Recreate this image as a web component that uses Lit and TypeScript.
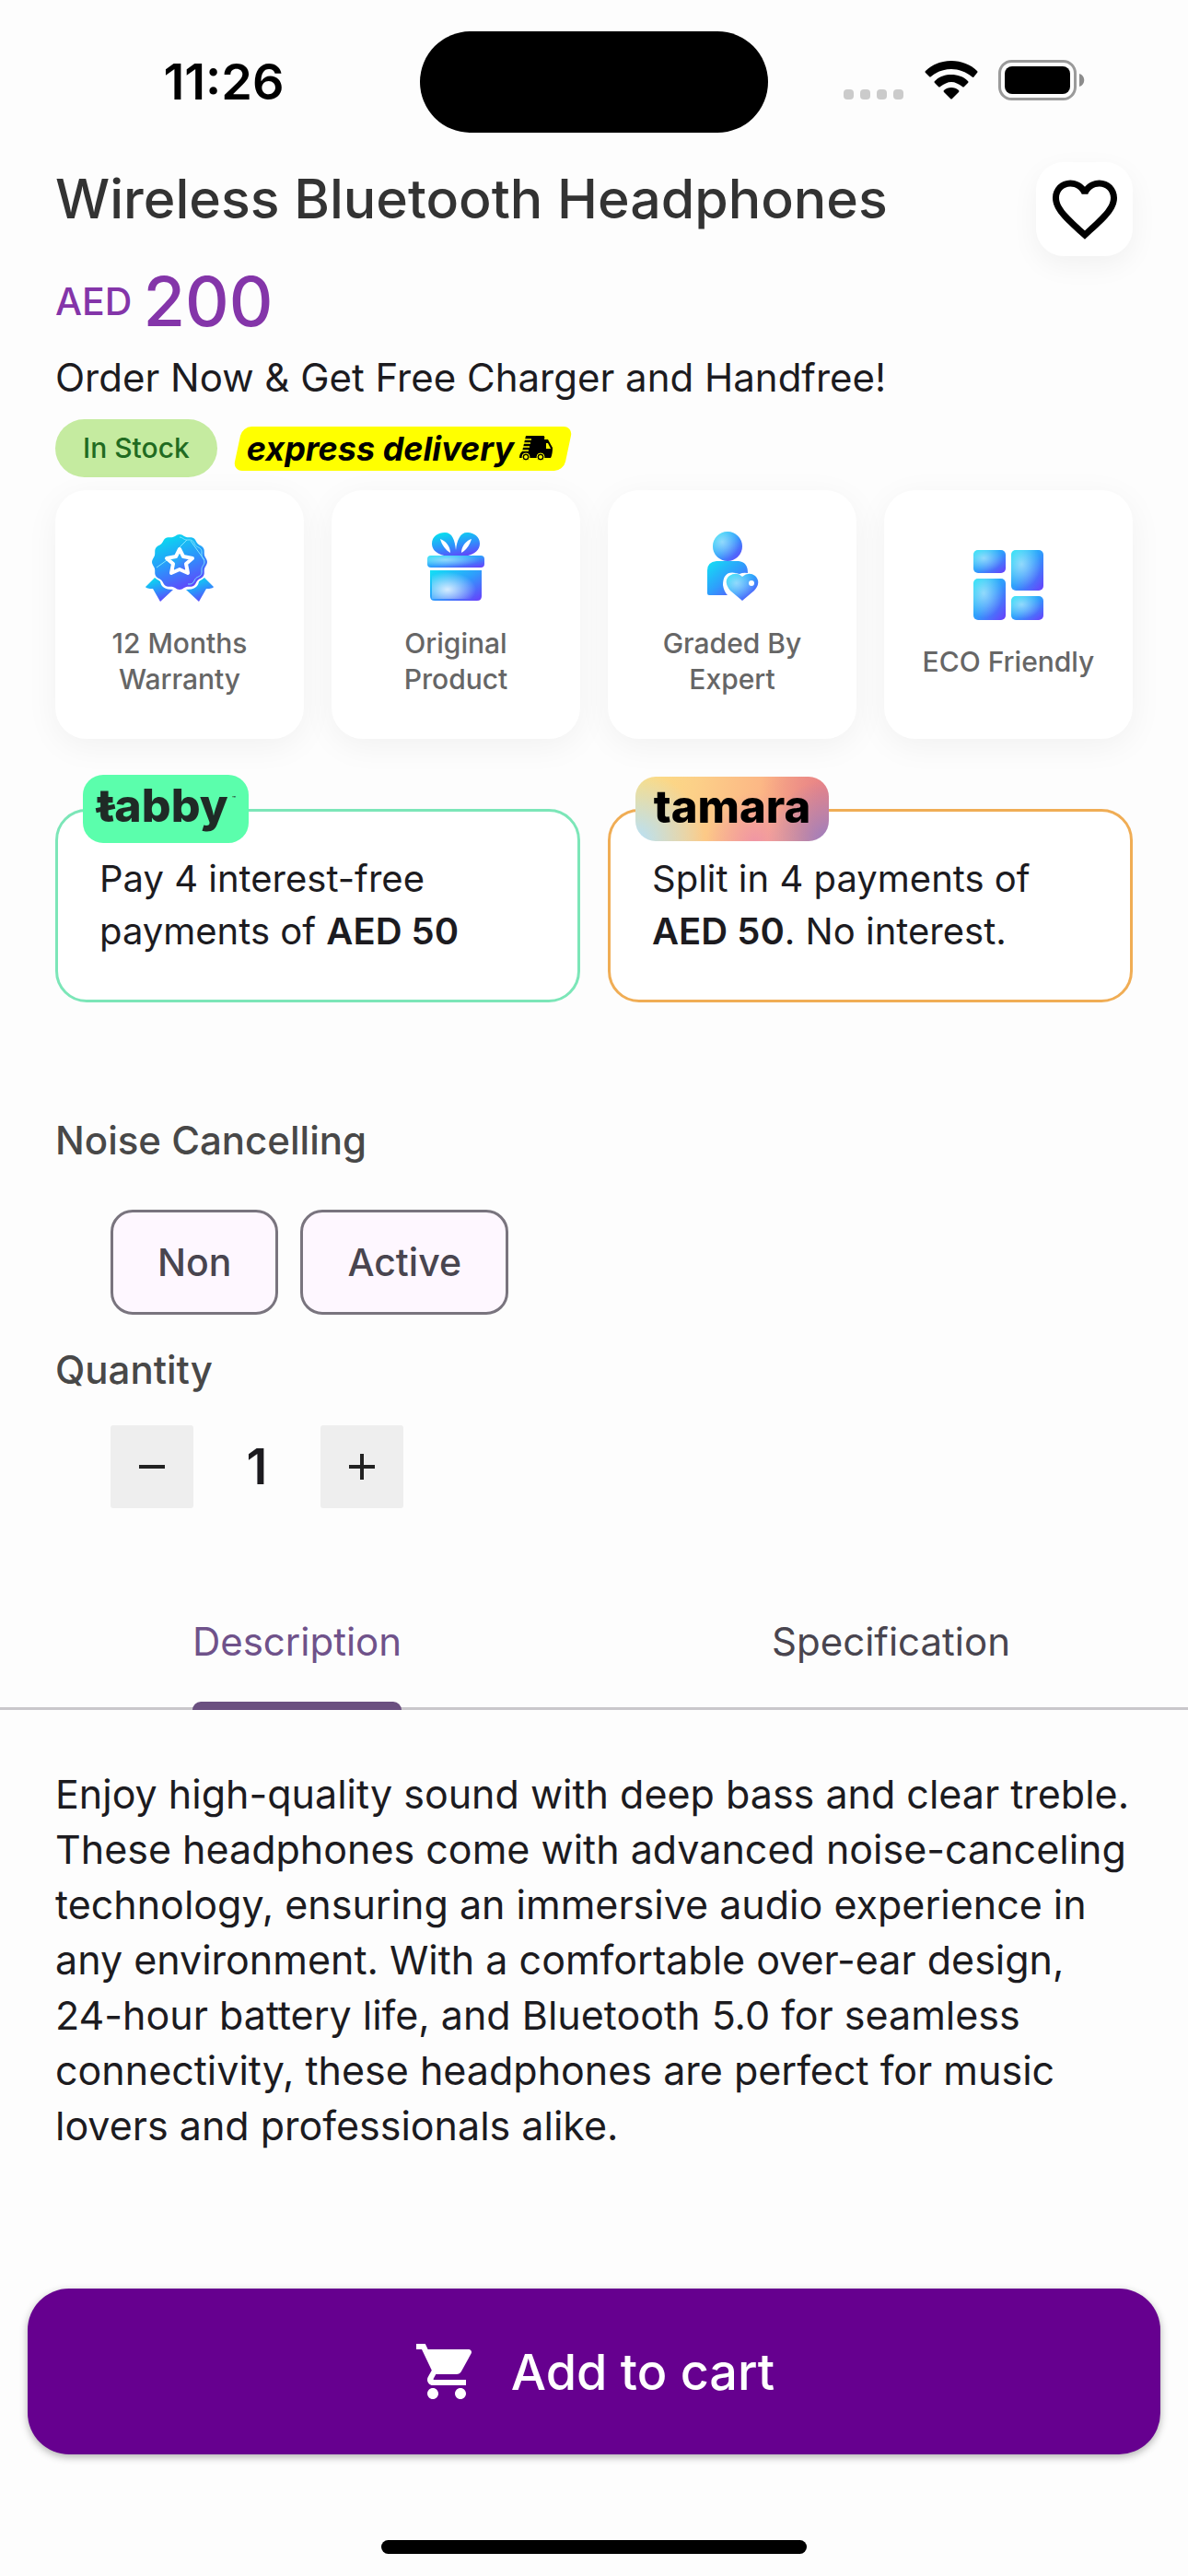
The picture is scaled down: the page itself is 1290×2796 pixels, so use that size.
import { LitElement, html, css, svg } from "lit";
import { customElement, state } from "lit/decorators.js";

const gradients = svg`
  <defs>
    <linearGradient id="blue" x1="0" y1="0" x2="1" y2="1">
      <stop offset="0" stop-color="#12e2f4" />
      <stop offset="0.5" stop-color="#2f9dfc" />
      <stop offset="1" stop-color="#6a3cfb" />
    </linearGradient>
    <linearGradient id="down" x1="0.3" y1="0" x2="0.7" y2="1">
      <stop offset="0" stop-color="#08dcef" />
      <stop offset="0.5" stop-color="#2c94fb" />
      <stop offset="1" stop-color="#6440fb" />
    </linearGradient>
    <radialGradient id="shine" cx="0.32" cy="0.35" r="0.6">
      <stop offset="0" stop-color="#ffffff" stop-opacity="0.5" />
      <stop offset="1" stop-color="#ffffff" stop-opacity="0" />
    </radialGradient>
    <radialGradient id="glow" cx="0.35" cy="0.65" r="0.65">
      <stop offset="0" stop-color="#ffffff" stop-opacity="0.8" />
      <stop offset="1" stop-color="#ffffff" stop-opacity="0" />
    </radialGradient>
  </defs>
`;

// Closed outline of a rosette with twelve soft lobes.
const rosette = (radius: number, depth: number) => {
  const points: string[] = [];
  for (let i = 0; i < 144; i++) {
    const a = (i / 144) * Math.PI * 2 - Math.PI / 2;
    const r = radius + depth * Math.cos(12 * (a + Math.PI / 2));
    points.push(`${(38 + r * Math.cos(a)).toFixed(2)} ${(33 + r * Math.sin(a)).toFixed(2)}`);
  }
  return `M${points.join("L")}Z`;
};

const medal = html`<svg class="feature-icon" viewBox="0 0 76 76" aria-hidden="true">
  ${gradients}
  <path fill="url(#down)" d="M11 50 L1 60 Q2 62 9 62 L17 76 L31 63 Q18 63 17 54 Z" />
  <path fill="url(#down)" d="M65 50 L75 60 Q74 62 67 62 L59 76 L45 63 Q58 63 59 54 Z" />
  <path fill="url(#down)" stroke="#fff" stroke-width="3" paint-order="stroke" d=${rosette(29, 1)} />
  <path fill="none" stroke="#7fe6ff" stroke-width="1" stroke-dasharray="76 200" stroke-dashoffset="0" d=${rosette(26, 1)} />
  <path fill="none" stroke="#7fe6ff" stroke-width="1" d="M13 39 L27 29 M38 17 L46 9 M50 10 L65 31" />
  <path fill="url(#blue)" stroke="#ffffff" stroke-width="4" stroke-linejoin="round" d="M38 19 L42 27 L52 29 L45 35 L47 45 L38 41 L29 45 L31 35 L24 29 L34 27 Z" />
</svg>`;

const gift = html`<svg class="feature-icon" viewBox="0 0 76 76" aria-hidden="true">
  ${gradients}
  <path fill="url(#down)" fill-rule="evenodd" d="M38 27 C26 28 12 24 12 13 C12 5 19 1 26 1 C34 1 37 9 38 20 C39 9 43 1 50 1 C57 1 64 5 64 13 C64 24 50 28 38 27 Z M21 8 C23 15 27 20 32 23 C32 16 27 10 21 8 Z M55 8 C53 15 49 20 44 23 C44 16 49 10 55 8 Z" />
  <rect x="7" y="26" width="62" height="13" rx="4" fill="url(#blue)" />
  <rect x="7" y="26" width="62" height="13" rx="4" fill="url(#shine)" />
  <path fill="url(#blue)" d="M10 42 H66 V70 Q66 75 61 75 H15 Q10 75 10 70 Z" />
  <path fill="url(#glow)" d="M12 44 H60 V73 H12 Z" />
</svg>`;

const expert = html`<svg class="feature-icon" viewBox="0 0 76 76" aria-hidden="true">
  ${gradients}
  <circle cx="33" cy="16" r="16" fill="url(#blue)" />
  <circle cx="33" cy="16" r="16" fill="url(#shine)" />
  <path fill="url(#blue)" d="M21 32 H45 Q55 33 55 45 Q50 44 46 46 Q28 40 28 58 Q29 65 33 69 H13 Q11 69 11 67 V42 Q11 33 21 32 Z" />
  <path fill="url(#blue)" d="M49 75 L36 64 Q28 54 35 48 Q43 43 49 49 Q56 43 63 48 Q70 55 62 64 Z" />
  <path fill="url(#shine)" d="M49 75 L36 64 Q28 54 35 48 Q43 43 49 49 Q56 43 63 48 Q70 55 62 64 Z" />
  <circle cx="59" cy="56" r="3" fill="#ffffff" />
</svg>`;

const tiles = [
  [0, 0, 35, 25],
  [41, 0, 35, 44],
  [0, 31, 35, 45],
  [41, 50, 35, 26],
];

const blocks = html`<svg class="feature-icon" viewBox="0 0 76 76" aria-hidden="true">
  ${gradients}
  ${tiles.map(
    ([x, y, w, h]) => svg`
      <rect x=${x} y=${y} width=${w} height=${h} rx="5" fill="url(#blue)" />
      <rect x=${x} y=${y} width=${w} height=${h} rx="5" fill="url(#shine)" />`
  )}
</svg>`;

const features = [
  { icon: medal, label: "12 Months Warranty" },
  { icon: gift, label: "Original Product" },
  { icon: expert, label: "Graded By Expert" },
  { icon: blocks, label: "ECO Friendly" },
];

@customElement("app-root")
export class AppRoot extends LitElement {
  @state() private quantity = 1;
  @state() private tab = 0;
  @state() private liked = false;

  static styles = css`
    :host {
      display: block;
      font-family: Inter, "Open Sans", sans-serif;
      color: #1c1b1f;
      background: #fdfdfd;
    }
    * {
      box-sizing: border-box;
    }
    h1,
    h2,
    p {
      margin: 0;
    }
    button {
      font: inherit;
      color: inherit;
      border: 0;
      padding: 0;
      background: none;
      cursor: pointer;
    }
    .page {
      display: flex;
      flex-direction: column;
      min-height: 100vh;
    }
    .status {
      display: grid;
      grid-template-columns: 1fr 378px 1fr;
      align-items: center;
      padding: 34px 0 32px;
    }
    .time {
      padding-left: 30px;
      text-align: center;
      font-size: 54px;
      line-height: 60px;
      font-weight: 600;
      color: #000;
    }
    .island {
      height: 110px;
      border-radius: 55px;
      background: #000;
    }
    .signals {
      display: flex;
      align-items: center;
      justify-content: flex-end;
      gap: 22px;
      padding: 0 112px 4px 0;
    }
    .dots {
      width: 66px;
      height: 42px;
    }
    .wifi {
      width: 58px;
      height: 42px;
    }
    .battery {
      width: 94px;
      height: 44px;
    }
    .content {
      flex: 1;
      display: flex;
      flex-direction: column;
    }
    .section {
      padding: 0 60px;
    }
    .head {
      display: flex;
      justify-content: space-between;
      align-items: flex-start;
    }
    .title {
      font-size: 59px;
      line-height: 80px;
      font-weight: 500;
      color: #333;
    }
    .like {
      display: grid;
      place-items: center;
      width: 105px;
      height: 102px;
      border-radius: 30px;
      background: #fff;
      box-shadow: 0 10px 30px rgba(0, 0, 0, 0.05);
    }
    .like svg {
      width: 84px;
      height: 84px;
    }
    .price {
      display: flex;
      align-items: center;
      gap: 12px;
      line-height: 98px;
      font-weight: 500;
      color: #8435a9;
    }
    .currency {
      font-size: 41px;
    }
    .amount {
      font-size: 74px;
    }
    .offer {
      font-size: 42px;
      line-height: 68px;
    }
    .badges {
      display: flex;
      align-items: center;
      gap: 18px;
      padding-top: 11px;
    }
    .stock {
      padding: 0 30px;
      border-radius: 32px;
      font-size: 30px;
      line-height: 63px;
      font-weight: 500;
      color: #216b21;
      background: #c5eba0;
    }
    .express {
      position: relative;
      display: flex;
      align-items: center;
      gap: 6px;
      height: 48px;
      padding: 0 20px 0 14px;
      font-size: 36px;
      line-height: 48px;
      font-weight: 700;
      font-style: italic;
      color: #000;
      z-index: 0;
    }
    .express::before {
      content: "";
      position: absolute;
      inset: 0 4px;
      border-radius: 10px;
      background: #ff0;
      transform: skewX(-12deg);
      z-index: -1;
    }
    .truck {
      width: 37px;
      height: 28px;
    }
    .features {
      display: grid;
      grid-template-columns: repeat(4, 1fr);
      gap: 30px;
      padding-top: 14px;
    }
    .feature {
      display: flex;
      flex-direction: column;
      align-items: center;
      justify-content: center;
      gap: 26px;
      height: 270px;
      padding: 0 30px;
      border-radius: 34px;
      background: #fff;
      box-shadow: 0 8px 36px rgba(0, 0, 0, 0.05);
      text-align: center;
      font-size: 30px;
      line-height: 39px;
      font-weight: 500;
      color: #666;
    }
    .feature.single {
      padding: 0;
    }
    .feature-icon {
      width: 76px;
      height: 76px;
    }
    .plans {
      display: grid;
      grid-template-columns: 1fr 1fr;
      gap: 30px;
      padding-top: 76px;
    }
    .plan {
      position: relative;
      height: 210px;
      padding: 44px 20px 0 45px;
      border: 3px solid #7ce6b8;
      border-radius: 34px;
      background: #fff;
      font-size: 40px;
      line-height: 57px;
    }
    .plan.tamara {
      border-color: #f0ad55;
    }
    .plan strong {
      font-weight: 600;
    }
    .brand {
      position: absolute;
      left: 27px;
      top: -40px;
      border-radius: 22px;
      color: #1f2a26;
      font-weight: 800;
    }
    .brand.green {
      width: 180px;
      height: 74px;
      padding-left: 15px;
      background: #5bfeac;
      font-size: 50px;
      line-height: 66px;
    }
    .brand.green::before {
      content: "";
      position: absolute;
      left: 14px;
      top: 34px;
      width: 21px;
      height: 5px;
      background: #1f2a26;
      transform: rotate(-12deg);
    }
    .brand.rainbow {
      top: -38px;
      width: 210px;
      height: 70px;
      color: #000;
      font-size: 49px;
      line-height: 66px;
      text-align: center;
      background:
        radial-gradient(circle at 0 100%, #b5e0fb 0, rgba(181, 224, 251, 0) 34%),
        radial-gradient(circle at 100% 100%, #9a7cc0 0, rgba(154, 124, 192, 0) 30%),
        radial-gradient(circle at 62% 100%, #f096a4 0, rgba(240, 150, 164, 0) 36%),
        radial-gradient(circle at 100% 20%, #e88286 0, rgba(232, 130, 134, 0) 34%),
        linear-gradient(100deg, #fbdf84 0, #fcd088 30%, #fcb585 65%, #ee9088 100%);
    }
    .tm {
      position: absolute;
      right: 14px;
      top: 22px;
      font-size: 6px;
      line-height: 8px;
    }
    .options {
      padding-top: 120px;
    }
    .label {
      font-size: 42px;
      line-height: 60px;
      font-weight: 500;
      color: #484848;
    }
    .chips {
      display: flex;
      gap: 24px;
      padding: 45px 0 30px 60px;
    }
    .chip {
      height: 114px;
      padding: 0 48px;
      border: 3px solid #79747e;
      border-radius: 24px;
      background: #fef7ff;
      color: #49454f;
      font-size: 41px;
      font-weight: 500;
    }
    .stepper {
      display: flex;
      align-items: center;
      padding: 30px 0 0 60px;
    }
    .step {
      display: grid;
      place-items: center;
      width: 90px;
      height: 90px;
      border-radius: 3px;
      background: #eee;
    }
    .step svg {
      width: 36px;
      height: 36px;
    }
    .count {
      width: 138px;
      text-align: center;
      font-size: 54px;
      line-height: 60px;
      font-weight: 600;
    }
    .tabs {
      display: grid;
      grid-template-columns: 1fr 1fr;
      margin-top: 75px;
      border-bottom: 3px solid #c9c7cb;
    }
    .tab {
      display: flex;
      justify-content: center;
      height: 144px;
      margin-bottom: -3px;
      font-size: 42px;
      color: #49454f;
    }
    .tab span {
      position: relative;
      line-height: 140px;
      height: 144px;
    }
    .tab[aria-selected="true"] {
      color: #6f528a;
    }
    .tab[aria-selected="true"] span::after {
      content: "";
      position: absolute;
      left: 0;
      right: 0;
      bottom: 0;
      height: 9px;
      border-radius: 9px 9px 0 0;
      background: #6b5080;
    }
    .description {
      padding-top: 61px;
      font-size: 43px;
      line-height: 60px;
    }
    .footer {
      display: flex;
      flex-direction: column;
      align-items: center;
      gap: 93px;
      padding: 30px 30px 24px;
    }
    .cart {
      display: flex;
      align-items: center;
      justify-content: center;
      gap: 34px;
      width: 100%;
      height: 180px;
      border-radius: 45px;
      background: #66008f;
      box-shadow: 0 3px 8px rgba(0, 0, 0, 0.3);
      color: #fff;
      font-size: 54px;
      font-weight: 500;
    }
    .cart svg {
      width: 72px;
      height: 72px;
    }
    .home {
      width: 462px;
      height: 15px;
      border-radius: 8px;
      background: #000;
    }
  `;

  private changeQuantity(delta: number) {
    this.quantity = Math.max(1, this.quantity + delta);
  }

  render() {
    return html`<div class="page">
      <header class="status">
        <div class="time">11:26</div>
        <div class="island"></div>
        <div class="signals">
          <svg class="dots" viewBox="0 0 66 42" aria-hidden="true" fill="#cbcbcb">
            ${[0, 18, 36, 54].map((x) => svg`<rect x=${x} y="31" width="11" height="11" rx="4" />`)}
          </svg>
          <svg class="wifi" viewBox="0 0 58 42" aria-hidden="true">
            <path d="M29 0 C40 0 50 4 57 11 Q58 12 57 13 L53 18 Q52 18 51 17 C45 12 37 9 29 9 C21 9 13 12 7 17 Q6 18 5 17 L1 13 Q0 12 1 11 C8 4 18 0 29 0 Z" />
            <path d="M29 15 C36 15 42 17 47 22 Q48 23 47 24 L43 28 Q42 29 41 28 C37 25 33 23 29 23 C25 23 21 25 17 28 Q16 29 15 28 L11 24 Q10 23 11 22 C16 17 22 15 29 15 Z" />
            <path d="M29 29 C32 29 35 30 37 32 Q38 33 37 34 L30 41 Q29 42 28 41 L21 34 Q20 33 21 32 C23 30 26 29 29 29 Z" />
          </svg>
          <svg class="battery" viewBox="0 0 94 44" aria-hidden="true">
            <rect x="1.500" y="1.500" width="82" height="41" rx="13" fill="none" stroke="#9a9a9a" stroke-width="3" />
            <rect x="7" y="7" width="71" height="30" rx="8" />
            <path fill="#8c8c8c" d="M88 15 C95 17 95 27 88 29 Z" />
          </svg>
        </div>
      </header>

      <main class="content">
        <section class="section">
          <div class="head">
            <h1 class="title">Wireless Bluetooth Headphones</h1>
            <button class="like" aria-label="Add to favourites" aria-pressed=${this.liked} @click=${() => (this.liked = !this.liked)}>
              <svg viewBox="0 0 24 24" aria-hidden="true">
                <path d="M16.500 3c-1.740 0-3.410.810-4.500 2.090C10.910 3.810 9.240 3 7.500 3 4.420 3 2 5.420 2 8.500c0 3.780 3.400 6.860 8.550 11.540L12 21.350l1.450-1.320C18.600 15.360 22 12.280 22 8.500 22 5.420 19.580 3 16.500 3zm-4.400 15.550l-.1.1-.1-.1C7.140 14.240 4 11.390 4 8.500 4 6.500 5.500 5 7.500 5c1.540 0 3.040.990 3.570 2.360h1.870C13.460 5.990 14.960 5 16.500 5c2 0 3.500 1.500 3.500 3.500 0 2.890-3.140 5.740-7.900 10.050z" />
              </svg>
            </button>
          </div>
          <p class="price"><span class="currency">AED</span><span class="amount">200</span></p>
          <p class="offer">Order Now &amp; Get Free Charger and Handfree!</p>
          <div class="badges">
            <span class="stock">In Stock</span>
            <span class="express">
              express delivery
              <svg class="truck" viewBox="0 0 37 28" aria-hidden="true">
                <path d="M7 0 H26 Q28 0 27 4 H31 L36 13 Q36 20 34 24 H0 Q0 19 3 17 Z" />
                <path d="M29 8 H31 L34 14 H29 Z" fill="#ff0" />
                <path d="M0 4 H13 M0 8 H12 M0 12 H11 M0 16 H10" stroke="#ff0" stroke-width="1.500" />
                <circle cx="7" cy="23" r="4" stroke="#ff0" stroke-width="1" />
                <circle cx="23" cy="23" r="4" stroke="#ff0" stroke-width="1" />
                <circle cx="7" cy="23" r="2" fill="#ff0" />
                <circle cx="23" cy="23" r="2" fill="#ff0" />
              </svg>
            </span>
          </div>
        </section>

        <section class="section features">
          ${features.map(
            (f) => html`<div class="feature ${f.label === "ECO Friendly" ? "single" : ""}">${f.icon}<span>${f.label}</span></div>`
          )}
        </section>

        <section class="section plans">
          <div class="plan">
            <span class="brand green">tabby<span class="tm">™</span></span>
            <p>Pay 4 interest-free<br />payments of <strong>AED 50</strong></p>
          </div>
          <div class="plan tamara">
            <span class="brand rainbow">tamara</span>
            <p>Split in 4 payments of<br /><strong>AED 50</strong>. No interest.</p>
          </div>
        </section>

        <section class="section options">
          <h2 class="label">Noise Cancelling</h2>
          <div class="chips">
            <button class="chip">Non</button>
            <button class="chip">Active</button>
          </div>
          <h2 class="label">Quantity</h2>
          <div class="stepper">
            <button class="step" aria-label="Decrease quantity" @click=${() => this.changeQuantity(-1)}>
              <svg viewBox="0 0 36 36" aria-hidden="true"><path d="M4 16 H32 V20 H4 Z" fill="#222" /></svg>
            </button>
            <output class="count">${this.quantity}</output>
            <button class="step" aria-label="Increase quantity" @click=${() => this.changeQuantity(1)}>
              <svg viewBox="0 0 36 36" aria-hidden="true"><path d="M4 16 H16 V4 H20 V16 H32 V20 H20 V32 H16 V20 H4 Z" fill="#222" /></svg>
            </button>
          </div>
        </section>

        <div class="tabs" role="tablist">
          ${["Description", "Specification"].map(
            (name, i) => html`<button class="tab" role="tab" aria-selected=${this.tab === i} @click=${() => (this.tab = i)}>
              <span>${name}</span>
            </button>`
          )}
        </div>
        <p class="section description">
          Enjoy high-quality sound with deep bass and clear treble. These headphones come with advanced noise-canceling
          technology, ensuring an immersive audio experience in any environment. With a comfortable over-ear design,
          24-hour battery life, and Bluetooth 5.0 for seamless connectivity, these headphones are perfect for music
          lovers and professionals alike.
        </p>
      </main>

      <footer class="footer">
        <button class="cart">
          <svg viewBox="0 0 24 24" aria-hidden="true" fill="#fff">
            <path d="M7 18c-1.100 0-1.990.9-1.990 2S5.900 22 7 22s2-.9 2-2-.9-2-2-2zM1 2v2h2l3.600 7.590-1.350 2.450c-.160.280-.250.610-.250.960 0 1.100.9 2 2 2h12v-2H7.420c-.140 0-.250-.110-.250-.250l.030-.120.9-1.630h7.450c.750 0 1.410-.410 1.750-1.030l3.580-6.490c.080-.140.120-.310.120-.480 0-.550-.450-1-1-1H5.210l-.940-2H1zm16 16c-1.100 0-1.990.9-1.990 2s.890 2 1.990 2 2-.9 2-2-.9-2-2-2z" />
          </svg>
          Add to cart
        </button>
        <div class="home"></div>
      </footer>
    </div>`;
  }
}
